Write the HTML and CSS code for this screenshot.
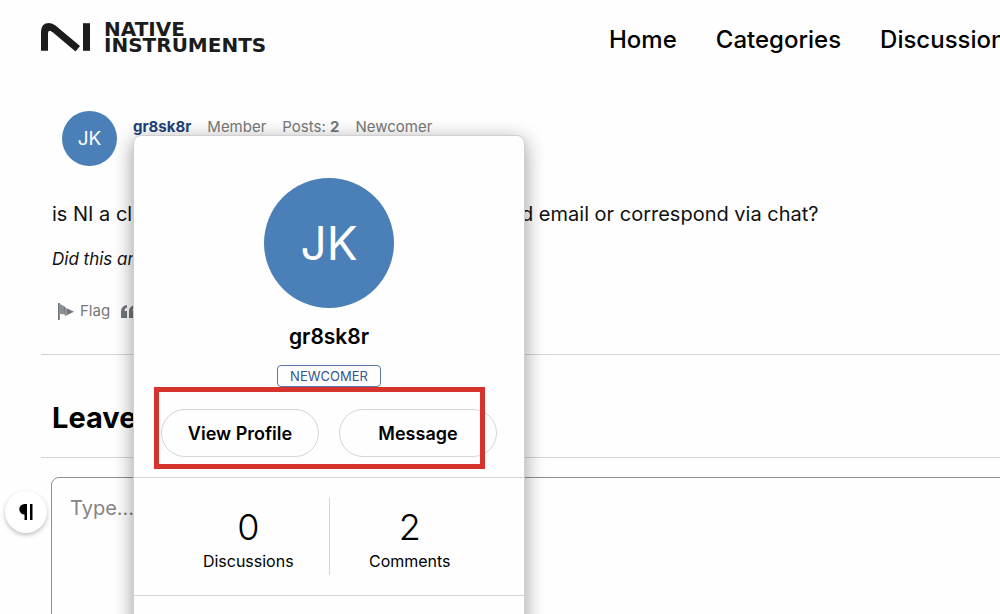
FILE: index.html
```html
<!DOCTYPE html>
<html lang="en">
<head>
<meta charset="utf-8">
<title>Native Instruments Community</title>
<link rel="stylesheet" href="styles.css">
</head>
<body>
<header class="site-header">
  <a class="logo" href="#">
    <svg class="logo-mark" width="50" height="30" viewBox="0 0 50 30" aria-hidden="true">
      <path d="M0 28.800V10Q0 1 8 1Q11.500 1 14.500 3.500L39 24L34.500 29.500L12 10.500Q7 6.500 7 11.500V28.800z" fill="#1b1c1c"/>
      <rect x="42" y="1.200" width="7" height="27.600" fill="#1b1c1c"/>
    </svg>
    <span class="wordmark"><span>NATIVE</span><span>INSTRUMENTS</span></span>
  </a>
  <nav class="site-nav">
    <a href="#">Home</a>
    <a href="#">Categories</a>
    <a href="#">Discussions</a>
  </nav>
</header>
<main class="page">
  <article class="comment">
    <div class="comment-head">
      <span class="avatar">JK</span>
      <div class="meta">
        <a class="author" href="#">gr8sk8r</a>
        <span>Member</span>
        <span>Posts: <b>2</b></span>
        <span>Newcomer</span>
      </div>
    </div>
    <p class="message"><span>is NI a cl</span><span>d email or correspond via chat?</span></p>
    <p class="question">Did this an</p>
    <div class="reactions">
      <button class="reaction" type="button">
        <svg width="16" height="17" viewBox="0 0 16 17" aria-hidden="true">
          <path d="M0 0h1.800v17H0z" fill="#70757b"/>
          <path d="M2 1l5.500 3v7.500L2 11z" fill="#8b8f94"/>
          <path d="M6 4l10 4.800L7 13z" fill="#70757b"/>
          <path d="M8 3v9" stroke="#fff" stroke-width="1" opacity=".5"/>
        </svg>
        Flag
      </button>
      <button class="reaction" type="button" aria-label="Quote">
        <svg width="16" height="13" viewBox="0 0 16 13" aria-hidden="true">
          <path d="M6 0v2.500Q3.500 3 3.500 6H6v7H0V6.500Q0 1 6 0zM14 0v2.500Q11.500 3 11.500 6H14v7H8V6.500Q8 1 14 0z" fill="#70757b"/>
        </svg>
      </button>
    </div>
  </article>
  <form class="reply">
    <h2 class="reply-title"><label for="reply-text">Leave</label></h2>
    <div class="editor">
      <textarea id="reply-text" class="reply-text" placeholder="Type..."></textarea>
      <button class="format" type="button" aria-label="Paragraph format">
        <svg width="14" height="16" viewBox="0 0 14 16" aria-hidden="true">
          <path d="M8 0v16H5.500V10.500A5.250 5.250 0 0 1 5.500 0zM11 0h2.500v16H11z" fill="#000"/>
        </svg>
      </button>
    </div>
  </form>
  <section class="card" aria-label="User profile">
    <div class="card-top">
      <span class="avatar avatar-large">JK</span>
      <h3 class="card-name">gr8sk8r</h3>
      <span class="rank">NEWCOMER</span>
      <div class="actions">
        <button type="button">View Profile</button>
        <button type="button">Message</button>
      </div>
    </div>
    <div class="stats">
      <div class="stat"><span class="count">0</span>Discussions</div>
      <div class="stat"><span class="count">2</span>Comments</div>
    </div>
    <div class="card-foot"></div>
    <div class="highlight"></div>
  </section>
</main>
</body>
</html>
```
FILE: styles.css
```css
* {
  box-sizing: border-box;
}

body {
  margin: 0;
  height: 100vh;
  overflow: hidden;
  background: #fefefe;
  color: #111;
  font-family: Inter, "Liberation Sans", sans-serif;
}

a {
  color: inherit;
  text-decoration: none;
}

button {
  font-family: inherit;
  color: inherit;
}

.site-header {
  display: flex;
  align-items: center;
  justify-content: space-between;
  height: 78px;
  padding-left: 41px;
}

.logo {
  display: flex;
  align-items: center;
  gap: 13px;
  margin-bottom: 4px;
}

.wordmark {
  display: grid;
  color: #1b1c1c;
  font: bold 20px/16px "DejaVu Sans", sans-serif;
}

.site-nav {
  display: flex;
  gap: 39px;
  width: 391px;
  color: #000;
  font-size: 24px;
  font-weight: 500;
  white-space: nowrap;
}

.page {
  position: relative;
  padding-left: 41px;
}

.comment {
  height: 277px;
  padding: 33px 0 0 11px;
  border-bottom: 1px solid #d5d5d5;
}

.comment-head {
  display: flex;
  gap: 16px;
  padding-left: 10px;
}

.avatar {
  display: flex;
  align-items: center;
  justify-content: center;
  width: 55px;
  height: 55px;
  border-radius: 50%;
  background: #4a7fb7;
  color: #fff;
  font-size: 19px;
  font-weight: 400;
}

.meta {
  display: flex;
  gap: 16px;
  padding-top: 6px;
  color: #777;
  font-size: 15px;
  line-height: 20px;
}

.author {
  color: #1d427b;
  font-weight: 700;
}

.message {
  display: grid;
  grid-template-columns: 469px 1fr;
  margin: 36px 0 0;
  font-size: 20px;
  line-height: 24px;
  white-space: nowrap;
}

.question {
  margin: 23px 0 0;
  font-size: 17px;
  font-style: italic;
  line-height: 20px;
}

.reactions {
  display: flex;
  gap: 11px;
  padding: 32px 0 0 6px;
}

.reaction {
  display: flex;
  align-items: center;
  gap: 6px;
  padding: 0;
  border: 0;
  background: none;
  color: #777;
  font-size: 15px;
  line-height: 20px;
}

.reply-title {
  margin: 0;
  padding: 44px 0 20px 11px;
  border-bottom: 1px solid #d5d5d5;
  color: #000;
  font-size: 29px;
  font-weight: 700;
  line-height: 38px;
}

.editor {
  position: relative;
  padding: 19px 0 0 10px;
}

.reply-text {
  display: block;
  width: calc(100% + 20px);
  height: 240px;
  padding: 17px 18px;
  border: 1px solid #968c90;
  border-radius: 8px;
  background: transparent;
  font: 20px/26px Inter, sans-serif;
  resize: none;
}

.reply-text::placeholder {
  color: #858585;
}

.format {
  position: absolute;
  top: 33px;
  left: -36px;
  display: flex;
  align-items: center;
  justify-content: center;
  width: 42px;
  height: 42px;
  padding: 0;
  border: 0;
  border-radius: 50%;
  background: #fff;
  box-shadow: 0 2px 4px rgba(0, 0, 0, 0.25);
}

.card {
  position: absolute;
  top: 57px;
  left: 133px;
  width: 392px;
  border: 1px solid #d0d0d0;
  border-radius: 8px;
  background: #fefefe;
  box-shadow: 0 5px 20px rgba(0, 0, 0, 0.4);
  color: #000;
}

.card-top {
  display: flex;
  flex-direction: column;
  align-items: center;
  padding: 42px 0 20px;
  border-bottom: 1px solid #d5d5d5;
}

.avatar-large {
  width: 130px;
  height: 130px;
  font-size: 46px;
}

.card-name {
  margin: 15px 0 15px;
  font-size: 21px;
  font-weight: 600;
  line-height: 27px;
}

.rank {
  padding: 0 12px;
  border: 1px solid #5878a8;
  border-radius: 4px;
  color: #35568c;
  font-size: 13px;
  line-height: 20px;
}

.actions {
  display: flex;
  gap: 20px;
  margin-top: 22px;
}

.actions button {
  width: 158px;
  height: 48px;
  padding: 0;
  border: 1px solid #d5d5d5;
  border-radius: 24px;
  background: transparent;
  font-size: 18px;
  font-weight: 600;
}

.stats {
  display: flex;
  padding: 20px 34px;
  border-bottom: 1px solid #d5d5d5;
}

.stat {
  display: flex;
  flex: 1;
  flex-direction: column;
  align-items: center;
  padding: 8px 0 2px;
  font-size: 16px;
  line-height: 24px;
}

.stat + .stat {
  border-left: 1px solid #d5d5d5;
}

.count {
  font-size: 36px;
  font-weight: 300;
  line-height: 43px;
}

.card-foot {
  height: 120px;
}

.highlight {
  position: absolute;
  top: 251px;
  left: 20px;
  width: 331px;
  height: 82px;
  border: 5px solid #d7332d;
  pointer-events: none;
}
```
